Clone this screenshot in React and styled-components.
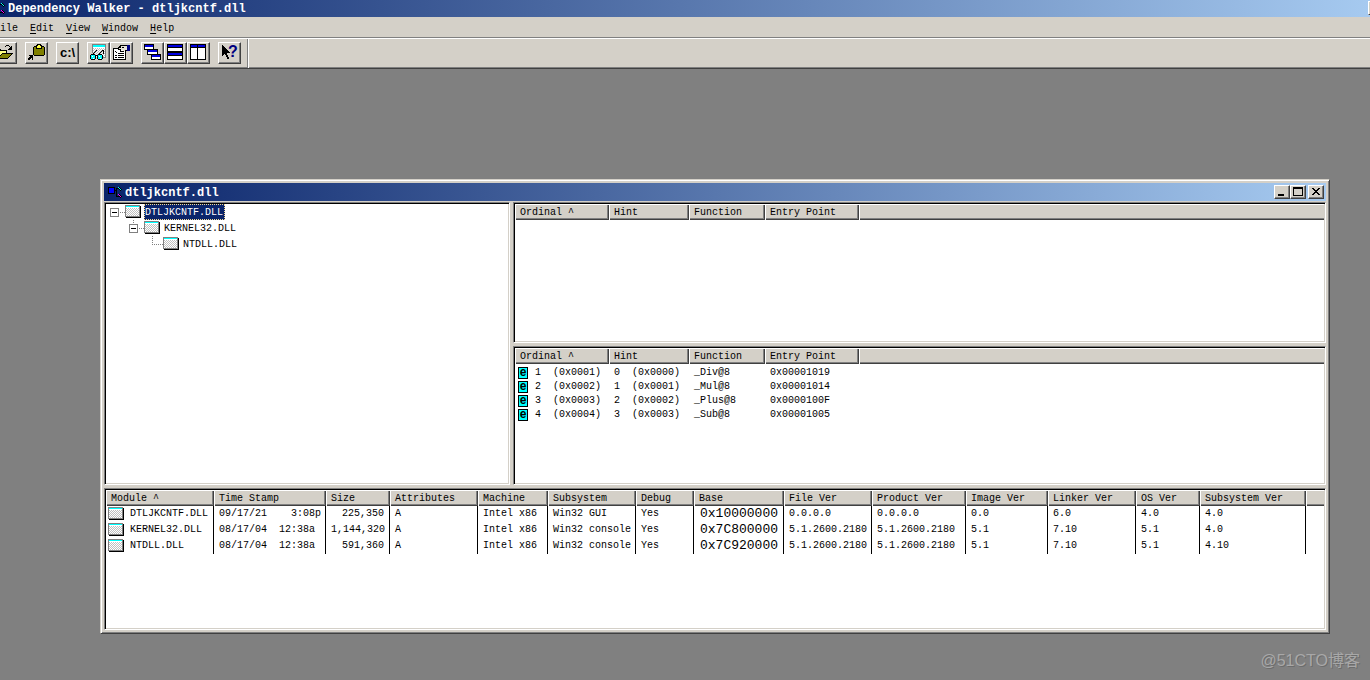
import React from "react";
import styled, { createGlobalStyle, css } from "styled-components";


const modules = [
    { name: "DTLJKCNTF.DLL", time: "09/17/21    3:08p", size: "225,350", attr: "A", machine: "Intel x86", subsystem: "Win32 GUI", debug: "Yes", base: "0x10000000", file: "0.0.0.0", product: "0.0.0.0", image: "0.0", linker: "6.0", os: "4.0", subver: "4.0" },
    { name: "KERNEL32.DLL", time: "08/17/04  12:38a", size: "1,144,320", attr: "A", machine: "Intel x86", subsystem: "Win32 console", debug: "Yes", base: "0x7C800000", file: "5.1.2600.2180", product: "5.1.2600.2180", image: "5.1", linker: "7.10", os: "5.1", subver: "4.0" },
    { name: "NTDLL.DLL", time: "08/17/04  12:38a", size: "591,360", attr: "A", machine: "Intel x86", subsystem: "Win32 console", debug: "Yes", base: "0x7C920000", file: "5.1.2600.2180", product: "5.1.2600.2180", image: "5.1", linker: "7.10", os: "5.1", subver: "4.10" },
]

const moduleColumns = [
    { title: "Module ^", width: 108 },
    { title: "Time Stamp", width: 112 },
    { title: "Size", width: 64 },
    { title: "Attributes", width: 88 },
    { title: "Machine", width: 70 },
    { title: "Subsystem", width: 88 },
    { title: "Debug", width: 58 },
    { title: "Base", width: 90 },
    { title: "File Ver", width: 88 },
    { title: "Product Ver", width: 94 },
    { title: "Image Ver", width: 82 },
    { title: "Linker Ver", width: 88 },
    { title: "OS Ver", width: 64 },
    { title: "Subsystem Ver", width: 106 },
]

const functionColumns = [
    { title: "Ordinal ^", width: 94 },
    { title: "Hint", width: 80 },
    { title: "Function", width: 76 },
    { title: "Entry Point", width: 94 },
]

const exportsList = [
    { ordinal: "1  (0x0001)", hint: "0  (0x0000)", name: "_Div@8", entry: "0x00001019" },
    { ordinal: "2  (0x0002)", hint: "1  (0x0001)", name: "_Mul@8", entry: "0x00001014" },
    { ordinal: "3  (0x0003)", hint: "2  (0x0002)", name: "_Plus@8", entry: "0x0000100F" },
    { ordinal: "4  (0x0004)", hint: "3  (0x0003)", name: "_Sub@8", entry: "0x00001005" },
]

const tree = {
    name: "DTLJKCNTF.DLL",
    selected: true,
    children: [{ name: "KERNEL32.DLL", children: [{ name: "NTDLL.DLL" }] }],
}

const menus = ["Edit", "View", "Window", "Help"]

const toolGroups = [
    [{ label: "Open", Icon: OpenIcon }],
    [{ label: "Copy", Icon: CopyIcon }],
    [{ label: "Full Paths", Icon: PathIcon }],
    [{ label: "View Module", Icon: ViewIcon }, { label: "Properties", Icon: PropertiesIcon }],
    [{ label: "Cascade", Icon: CascadeIcon }, { label: "Tile Horizontally", Icon: TileRowsIcon }, { label: "Tile Vertically", Icon: TileColumnsIcon }],
    [{ label: "Help", Icon: HelpIcon }],
]


export default function App() {
    return (
        <Page>
            <GlobalStyle />
            <TitleBar>
                <TitleText>
                    <AppIcon />
                    <h1>Dependency Walker - dtljkcntf.dll</h1>
                </TitleText>
                <EdgeButton type="button" aria-label="Minimize application" />
            </TitleBar>
            <MenuBar>
                <MenuItem type="button">ile</MenuItem>
                {menus.map(name => (
                    <MenuItem key={name} type="button"><u>{name[0]}</u>{name.slice(1)}</MenuItem>
                ))}
            </MenuBar>
            <ToolBar>
                <Tools>
                    {toolGroups.map((group, i) => (
                        <ToolGroup key={i}>
                            {group.map(({ label, Icon }) => (
                                <ToolButton key={label} type="button" aria-label={label}><Icon /></ToolButton>
                            ))}
                        </ToolGroup>
                    ))}
                </Tools>
            </ToolBar>
            <Desktop>
                <ChildWindow />
                <Watermark>@51CTO博客</Watermark>
            </Desktop>
        </Page>
    )
}

function ChildWindow() {
    return (
        <Window>
            <WindowTitle>
                <TitleText>
                    <AppIcon />
                    <h2>dtljkcntf.dll</h2>
                </TitleText>
                <WindowButtons>
                    <WindowButton type="button" aria-label="Minimize">
                        <Drawing width="12" height="10"><path d="M2 7h6v2H2z" /></Drawing>
                    </WindowButton>
                    <WindowButton type="button" aria-label="Maximize">
                        <Drawing width="12" height="10"><path d="M1 0h10v9H1zM2 2v6h8V2z" fillRule="evenodd" /></Drawing>
                    </WindowButton>
                    <WindowButton type="button" aria-label="Close" $apart>
                        <Drawing width="12" height="10">
                            <path d="M2 1h2v1h1v1h2V2h1V1h2v1H9v1H8v1H7v1h1v1h1v1h1v1H8V7H7V6H5v1H4v1H2V7h1V6h1V5h1V4H4V3H3V2H2z" />
                        </Drawing>
                    </WindowButton>
                </WindowButtons>
            </WindowTitle>
            <Panes>
                <TopPanes>
                    <Pane>
                        <TreeList><TreeNode node={tree} root /></TreeList>
                    </Pane>
                    <FunctionPanes>
                        <Pane $height={141}>
                            <ListView columns={functionColumns} label="Imports" />
                        </Pane>
                        <Pane $height={139}>
                            <ListView columns={functionColumns} label="Exports">
                                {exportsList.map(row => (
                                    <tr key={row.name}>
                                        <FunctionCell $icon><CellContent $gap={7}><ExportBadge>e</ExportBadge>{row.ordinal}</CellContent></FunctionCell>
                                        <FunctionCell>{row.hint}</FunctionCell>
                                        <FunctionCell>{row.name}</FunctionCell>
                                        <FunctionCell>{row.entry}</FunctionCell>
                                        <FunctionCell />
                                    </tr>
                                ))}
                            </ListView>
                        </Pane>
                    </FunctionPanes>
                </TopPanes>
                <Pane $height={142}>
                    <ListView columns={moduleColumns} label="Modules">
                        {modules.map(row => (
                            <tr key={row.name}>
                                <ModuleCell $icon><CellContent $gap={6}><ModuleIcon />{row.name}</CellContent></ModuleCell>
                                <ModuleCell>{row.time}</ModuleCell>
                                <ModuleCell $right>{row.size}</ModuleCell>
                                <ModuleCell>{row.attr}</ModuleCell>
                                <ModuleCell>{row.machine}</ModuleCell>
                                <ModuleCell>{row.subsystem}</ModuleCell>
                                <ModuleCell>{row.debug}</ModuleCell>
                                <ModuleCell $large>{row.base}</ModuleCell>
                                <ModuleCell>{row.file}</ModuleCell>
                                <ModuleCell>{row.product}</ModuleCell>
                                <ModuleCell>{row.image}</ModuleCell>
                                <ModuleCell>{row.linker}</ModuleCell>
                                <ModuleCell>{row.os}</ModuleCell>
                                <ModuleCell>{row.subver}</ModuleCell>
                                <td />
                            </tr>
                        ))}
                    </ListView>
                </Pane>
            </Panes>
        </Window>
    )
}

function ListView({ columns, label, children }) {
    return (
        <Table aria-label={label}>
            <colgroup>
                {columns.map(col => <Col key={col.title} $width={col.width} />)}
                <col />
            </colgroup>
            <thead>
                <tr>
                    {columns.map(col => <HeaderCell key={col.title}>{col.title}</HeaderCell>)}
                    <HeaderCell $rest />
                </tr>
            </thead>
            <tbody>{children}</tbody>
        </Table>
    )
}

function TreeNode({ node, root }) {
    return (
        <li>
            <TreeRow>
                <Branch $root={root} $leaf={!node.children}>
                    {node.children &&
                        <Expander type="button" aria-label={"Collapse " + node.name} />
                    }
                </Branch>
                <ModuleIcon />
                <TreeLabel $selected={node.selected}>{node.name}</TreeLabel>
            </TreeRow>
            {node.children &&
                <TreeChildren>
                    {node.children.map(child => <TreeNode key={child.name} node={child} />)}
                </TreeChildren>
            }
        </li>
    )
}


// icons

function AppIcon() {
    return (
        <Drawing width="16" height="16" aria-hidden="true">
            <path d="M1 3h7v7H1z" />
            <path d="M2 4h5v5H2z" fill="#00f" />
            <path d="M8 6h2v1H8zM9 4h1v9H9zM9 4h3v1H9zM9 12h3v1H9z" />
            <path d="M12 3h1v1h1v1h1v1h-1v1h-1V6h-1zM12 10h1v1h1v1h1v1h-1v1h-1v-1h-1z" />
            <path d="M11 3h1v1h1v1h1v1h-1V5h-1V4h-1z" fill="#0ff" />
            <path d="M11 10h1v1h1v1h1v1h-1v-1h-1v-1h-1z" fill="#f0f" />
        </Drawing>
    )
}

function ModuleIcon() {
    return (
        <Drawing width="16" height="14" aria-hidden="true">
            <defs>
                <pattern id="dots" width="2" height="2" patternUnits="userSpaceOnUse">
                    <path d="M0 0h2v2H0z" fill="#fff" />
                    <path d="M0 0h1v1H0zM1 1h1v1H1z" fill="#c0c0c0" />
                </pattern>
            </defs>
            <path d="M1 1h15v12H1z" />
            <path d="M0 0h15v12H0z" fill="#808080" />
            <path d="M1 1h13v10H1z" fill="#fff" />
            <path d="M1 1h13v1H1z" fill="#0ff" />
            <path d="M1 3h13v8H1z" fill="url(#dots)" />
        </Drawing>
    )
}

function OpenIcon() {
    return (
        <Drawing width="19" height="18">
            <path d="M1 5h4v1h6v3h6v1h-1v1h-1v1h-1v1h-1v1h-1v1H1z" />
            <path d="M2 6h2v1h6v2H6v1H5v1H4v1H3v1H2z" fill="#ffff80" />
            <path d="M6 10h9v1h-1v1h-1v1h-1v1H3v-1h1v-1h1v-1h1z" fill="#808000" />
            <path d="M9 2h1V1h3v1h1v1h1V2h1v4h-4V5h1V4h1V3h-1V2h-3v1H9z" />
        </Drawing>
    )
}

function CopyIcon() {
    return (
        <Drawing width="19" height="18">
            <path d="M7 2h2V1h1V0h4v1h1v1h2v1h1v8h-1v1H7v-1H6V3h1z" />
            <path d="M7 3h10v8H7z" fill="#808000" />
            <path d="M9 2h6v3H9z" />
            <path d="M10 2h1V1h2v1h1v2h-4z" fill="#ffff40" />
            <path d="M2 11h4v5H5v-2H4v1H3v1H1v-2h1v-1h1v-1H2z" />
        </Drawing>
    )
}

function PathIcon() {
    return <PathText>c:\</PathText>
}

function ViewIcon() {
    return (
        <Drawing width="19" height="18">
            <path d="M3 0h14v14h-4v-1h3V1H4v8H3z" fill="#808080" />
            <path d="M4 1h12v12H4z" fill="#fff" />
            <path d="M4 1h12v2H4z" fill="#0ff" />
            <path d="M4 4h12v9H4z" fill="url(#dots)" />
            <path d="M5 8h1V7h1V6h1v1H7v1H6v1H5v1H4V9h1zM11 8h1V7h1V6h2v4h-1V7h-1v1h-1v1h-1v1h-1V9h1z" />
            <path d="M1 11h1v-1h4v1h3v-1h4v1h1v4h-1v1H9v-1H8v-3H7v3H6v1H2v-1H1z" />
            <path d="M2 11h4v4H2zM9 11h4v4H9z" fill="#0ff" />
            <path d="M3 12h1v1H3zM10 12h1v1h-1zM4 14h1v1H4zM11 14h1v1h-1z" fill="#fff" />
        </Drawing>
    )
}

function PropertiesIcon() {
    return (
        <Drawing width="19" height="18">
            <path d="M1 4h5V3h1V2h1V1h7v1h1v5h-2v9H1z" />
            <path d="M2 5h11v10H2z" fill="#fff" />
            <path d="M9 2h6v4h-2v1h-2V6H9V5H7V4h2z" fill="#e8e4d8" />
            <path d="M3 7h1v1h1v1H4V8H3zM6 5h3v1H6zM8 6h1v1h3v1H8zM6 9h6v1H6zM3 11h2v1H3zM6 11h6v1H6zM3 13h2v1H3zM6 13h6v1H6zM10 3h2v1h-2z" />
            <path d="M15 1h3v6h-3z" fill="#000080" />
        </Drawing>
    )
}

function CascadeIcon() {
    return (
        <Drawing width="19" height="18">
            <path d="M1 0h10v6H1z" />
            <path d="M2 1h8v2H2z" fill="#0000e0" />
            <path d="M2 3h8v2H2z" fill="#fff" />
            <path d="M4 5h11v6H4z" />
            <path d="M5 6h9v2H5z" fill="#0000e0" />
            <path d="M5 8h9v2H5z" fill="#fff" />
            <path d="M8 10h10v6H8z" />
            <path d="M9 11h8v2H9z" fill="#0000e0" />
            <path d="M9 13h8v2H9z" fill="#fff" />
        </Drawing>
    )
}

function TileRowsIcon() {
    return (
        <Drawing width="19" height="18">
            <path d="M1 0h16v16H1z" />
            <path d="M2 1h14v2H2zM2 9h14v2H2z" fill="#0000e0" />
            <path d="M2 4h14v3H2zM2 12h14v3H2z" fill="#fff" />
        </Drawing>
    )
}

function TileColumnsIcon() {
    return (
        <Drawing width="19" height="18">
            <path d="M1 0h16v16H1z" />
            <path d="M2 1h6v2H2zM9 1h7v2H9z" fill="#0000e0" />
            <path d="M2 4h6v11H2zM9 4h7v11H9z" fill="#fff" />
        </Drawing>
    )
}

function HelpIcon() {
    return (
        <Drawing width="19" height="18">
            <path d="M2 1h1v1h1v1h1v1h1v1h1v1h1v1h1v1h1v1H7v2h1v2h1v2H7v-2H6v-2H5v-1H4v1H3v1H2z" />
            <HelpMark x="8" y="13">?</HelpMark>
        </Drawing>
    )
}


const GlobalStyle = createGlobalStyle`
    * {
        box-sizing: border-box;
    }

    body {
        margin: 0;
        overflow: hidden;
        background-color: #808080;
        color: black;
        font-family: "Liberation Mono", "Noto Sans CJK SC", monospace;
        font-size: 10px;
        line-height: 16px;
    }

    button {
        padding: 0;
        border: 0;
        color: inherit;
        background-color: #d4d0c8;
        font: inherit;
    }
`

const raised = css`
    border: 1px solid;
    border-color: white #404040 #404040 white;
    box-shadow: inset -1px -1px #808080;
`

const Drawing = styled.svg`
    display: block;
    flex: none;
    shape-rendering: crispEdges;
`

// the main frame runs past the left side of the screen
const Page = styled.div`
    display: flex;
    flex-direction: column;
    min-height: 100vh;
    margin-left: -10px;
`

const TitleBar = styled.header`
    display: flex;
    align-items: flex-start;
    justify-content: space-between;
    height: 17px;
    overflow: hidden;
    background: linear-gradient(to right, #0a246a, #a6caf0);
`

const TitleText = styled.div`
    display: flex;
    align-items: flex-start;
    gap: 2px;
    color: white;

    h1, h2 {
        margin: 0;
        padding-top: 1px;
        font-size: 12px;
        line-height: 16px;
        white-space: pre;
    }
`

const EdgeButton = styled.button`
    width: 2px;
    height: 14px;
    margin-top: 1px;
    border-top: 1px solid white;
    border-left: 1px solid white;
    border-bottom: 1px solid #404040;
`

const MenuBar = styled.nav`
    display: flex;
    gap: 12px;
    height: 21px;
    padding: 4px 10px 0;
    background-color: #d4d0c8;
    border-bottom: 1px solid #808080;
`

const MenuItem = styled.button`
    height: 16px;

    u {
        text-underline-offset: 2px;
    }
`

const ToolBar = styled.div`
    display: flex;
    background-color: #d4d0c8;
    border-top: 1px solid white;
    border-bottom: 1px solid #404040;
    box-shadow: inset 0 -1px #808080;
`

const Tools = styled.div`
    display: flex;
    gap: 8px;
    padding: 3px 6px 4px 4px;
    border-right: 1px solid #808080;
    box-shadow: 1px 0 white;
`

const ToolGroup = styled.div`
    display: flex;
`

const ToolButton = styled.button`
    display: flex;
    align-items: center;
    justify-content: center;
    width: 23px;
    height: 22px;
    ${raised}
`

const PathText = styled.span`
    font-family: "Liberation Sans", sans-serif;
    font-size: 13px;
    font-weight: bold;
`

const HelpMark = styled.text`
    fill: #000080;
    font-family: "Liberation Sans", sans-serif;
    font-size: 16px;
    font-weight: bold;
`

const Desktop = styled.main`
    position: relative;
    flex: 1;
    background-color: #808080;
`

const Window = styled.section`
    position: absolute;
    top: 110px;
    left: 110px;
    right: 40px;
    padding: 2px;
    background-color: #d4d0c8;
    border: 1px solid;
    border-color: #d4d0c8 #404040 #404040 #d4d0c8;
    box-shadow: inset 1px 1px white, inset -1px -1px #808080;
`

const WindowTitle = styled.header`
    display: flex;
    align-items: flex-start;
    justify-content: space-between;
    height: 18px;
    margin: 1px;
    padding: 1px 2px 0 3px;
    background: linear-gradient(to right, #0a246a, #a6caf0);
`

const WindowButtons = styled.div`
    display: flex;
    padding-top: 1px;
`

const WindowButton = styled.button`
    display: flex;
    justify-content: center;
    width: 16px;
    height: 14px;
    padding-top: 1px;
    margin-left: ${props => props.$apart ? "2px" : "0"};
    ${raised}
`

const Panes = styled.div`
    display: grid;
    gap: 3px;
    margin: 0 1px 1px;
`

const TopPanes = styled.div`
    display: grid;
    grid-template-columns: 406fr 813fr;
    gap: 3px;
`

const FunctionPanes = styled.div`
    display: grid;
    gap: 3px;
`

const Pane = styled.div`
    min-height: ${props => props.$height ? props.$height + "px" : "0"};
    background-color: white;
    border: 1px solid;
    border-color: #808080 white white #808080;
    box-shadow: inset 1px 1px black, inset -1px -1px #d4d0c8;
    padding: 1px;
`

const TreeList = styled.ul`
    margin: 0;
    padding: 0 0 0 4px;
    list-style: none;
`

const TreeChildren = styled.ul`
    margin: 0;
    padding: 0 0 0 19px;
    list-style: none;
`

const TreeRow = styled.div`
    display: flex;
    align-items: center;
    height: 16px;
`

const Branch = styled.span`
    width: 15px;
    height: 16px;
    padding-top: 4px;
    background-repeat: no-repeat;
    background-image:
        repeating-linear-gradient(to right, #808080 0 1px, transparent 1px 2px),
        repeating-linear-gradient(to bottom, #808080 0 1px, transparent 1px 2px);
    background-position: 4px 8px, 4px 0;
    background-size: 11px 1px, 1px ${props => props.$root ? "0" : props.$leaf ? "9px" : "4px"};
`

const Expander = styled.button`
    display: block;
    width: 9px;
    height: 9px;
    border: 1px solid #808080;
    background: linear-gradient(black, black) center / 5px 1px no-repeat white;
`

const TreeLabel = styled.span`
    margin-left: 3px;
    padding: 2px 2px 0 1px;
    color: ${props => props.$selected ? "white" : "black"};
    background-color: ${props => props.$selected ? "#0a246a" : "transparent"};
    outline: ${props => props.$selected ? "1px dotted #f5db95" : "none"};
    outline-offset: -1px;
    line-height: 14px;
`

const Table = styled.table`
    width: 100%;
    table-layout: fixed;
    border-collapse: separate;
    border-spacing: 0;
    white-space: pre;
`

const Col = styled.col`
    width: ${props => props.$width}px;
`

const HeaderCell = styled.th`
    height: 16px;
    padding: 2px 0 0 5px;
    background-color: #d4d0c8;
    box-shadow: ${props => props.$rest
        ? "inset 1px 1px white, inset 0 -1px #404040, inset 0 -2px #808080"
        : "inset 1px 1px white, inset -1px -1px #404040, inset -2px -2px #808080"};
    font-weight: normal;
    line-height: 14px;
    text-align: left;
`

const FunctionCell = styled.td`
    height: 14px;
    padding: 0 0 0 ${props => props.$icon ? "3px" : "5px"};
    line-height: 14px;

    tr:first-child > & {
        height: 16px;
        padding-top: 2px;
    }
`

const ModuleCell = styled.td`
    height: 16px;
    padding: 0 ${props => props.$right ? "5px" : "0"} 0 ${props => props.$icon ? "2px" : props.$large ? "6px" : "5px"};
    border-right: 1px solid black;
    font-size: ${props => props.$large ? "13px" : "10px"};
    text-align: ${props => props.$right ? "right" : "left"};
`

const CellContent = styled.span`
    display: flex;
    align-items: center;
    gap: ${props => props.$gap}px;
`

const ExportBadge = styled.span`
    width: 10px;
    height: 12px;
    background-color: cyan;
    border: 1px solid black;
    font-family: "Liberation Sans", sans-serif;
    font-size: 12px;
    font-weight: bold;
    line-height: 9px;
    text-align: center;
`

const Watermark = styled.p`
    position: absolute;
    right: 10px;
    bottom: 7px;
    margin: 0;
    color: #a8a8a8;
    font-family: "Liberation Sans", "Noto Sans CJK SC", sans-serif;
    font-size: 16px;
    line-height: 24px;
    text-shadow: 1px 1px #6c6c6c;
`
